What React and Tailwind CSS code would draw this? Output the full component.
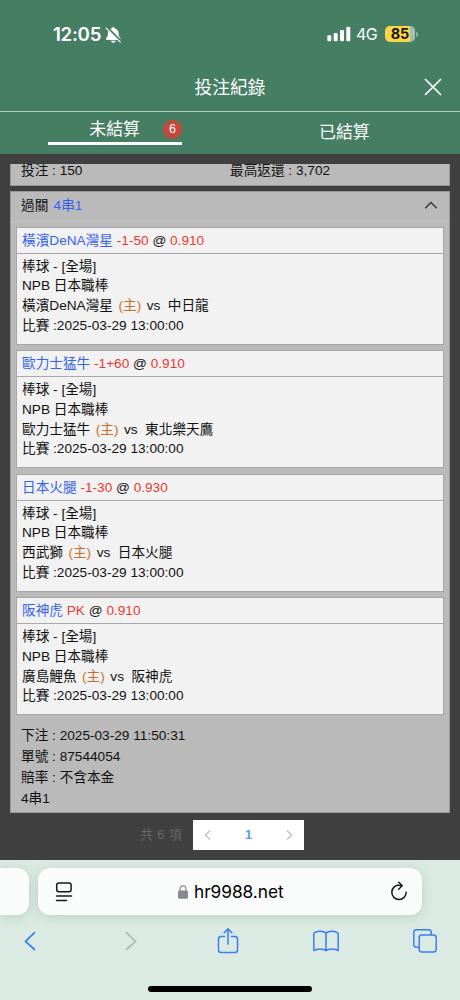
const legs = [
  { pick: '橫濱DeNA灣星', line: '-1-50', odds: '0.910', home: '橫濱DeNA灣星', away: '中日龍' },
  { pick: '歐力士猛牛', line: '-1+60', odds: '0.910', home: '歐力士猛牛', away: '東北樂天鷹' },
  { pick: '日本火腿', line: '-1-30', odds: '0.930', home: '西武獅', away: '日本火腿' },
  { pick: '阪神虎', line: 'PK', odds: '0.910', home: '廣島鯉魚', away: '阪神虎' },
];

function StatusBar() {
  return (
    <div className="flex h-[66px] items-end pb-[20px] pl-[53px] pr-[42px] text-white">
      <div className="mb-[-1px] h-[24px] w-[49px] whitespace-nowrap font-['Inter'] text-[18.7px] font-semibold leading-[24px] tracking-[-0.3px]">12:05</div>
      <svg className="mb-[2px] ml-[3px] h-[18px] w-[17px]" viewBox="0 0 17 18" fill="none">
        <path d="M8.3 1.2c-.9 0-1.600.5-1.700 1.200C4.100 3.100 2.900 5.100 2.900 7.600c0 2.600-.5 3.300-1.600 4.400-.7.8-.3 2 .8 2h12.400c1.100 0 1.500-1.200.8-2-1.100-1.100-1.600-1.800-1.600-4.400 0-2.500-1.200-4.500-3.700-5.200-.1-.7-.8-1.200-1.700-1.200z" fill="white" />
        <path d="M5.900 14.800h4.900c-.2 1.200-1.200 1.900-2.450 1.900s-2.250-.7-2.450-1.900z" fill="white" />
        <path d="M1.900 1.300L16 15.400" stroke="#467e64" strokeWidth="2.400" />
        <path d="M1.200 2.100L15.300 16.200" stroke="white" strokeWidth="1.200" strokeLinecap="round" />
      </svg>
      <div className="flex-1" />
      <svg className="mb-[4px] h-[16px] w-[24px]" viewBox="0 0 24 16" fill="white">
        <rect x="0.300" y="9.300" width="4" height="6" rx="1.200" />
        <rect x="6.700" y="7" width="4" height="8.300" rx="1.200" />
        <rect x="13" y="4" width="4" height="11.300" rx="1.200" />
        <rect x="19.300" y="0.700" width="4" height="14.600" rx="1.200" />
      </svg>
      <div className="ml-[5px] h-[24px] w-[22px] whitespace-nowrap font-['Inter'] text-[16px] leading-[24px] tracking-[-0.6px]">4G</div>
      <div className="mb-[4px] ml-[7px] flex items-center">
        <div className="flex h-[16px] w-[30px] items-center justify-center rounded-[5px] bg-[linear-gradient(90deg,#fbd64a_84%,#a3bfb1_84%)] font-['Inter'] text-[14.500px] font-bold leading-[16px] text-[#18170c]">85</div>
        <div className="ml-px h-[5px] w-[2px] rounded-r-full bg-[#8fb1a1]" />
      </div>
    </div>
  );
}

function Leg({ leg }) {
  return (
    <div className="flex h-[118px] flex-col border border-[#a6a6a6] bg-[#f2f2f2] px-[5px]">
      <div className="-mx-[5px] h-[26px] whitespace-nowrap border-b border-[#a8a8a8] px-[5px] leading-[25px]">
        <span className="text-[#3563ef]">{leg.pick}</span>
        <span className="text-[#e83b30]"> {leg.line}</span> @ <span className="text-[#e83b30]">{leg.odds}</span>
      </div>
      <div className="pt-[3.100px] leading-[19.800px]">
        <div className="h-[19.800px]">棒球 - [全場]</div>
        <div className="h-[19.800px]">NPB 日本職棒</div>
        <div className="flex h-[19.800px] whitespace-nowrap">
          <span>{leg.home}</span>
          <span className="ml-[5.500px] text-[#c9702f]">(主)</span>
          <span className="ml-[5.500px]">vs</span>
          <span className="ml-[7.500px]">{leg.away}</span>
        </div>
        <div className="h-[19.800px]">比賽 :2025-03-29 13:00:00</div>
      </div>
    </div>
  );
}

function BrowserBar() {
  return (
    <div className="flex h-[140px] flex-col overflow-hidden bg-[#dbebe4]">
      <div className="flex h-[55px] pt-[8px]">
        <div className="h-[47px] w-[29px] rounded-r-[12px] bg-[#f9fcfb] shadow-[0_2px_12px_rgba(60,100,80,0.2)]" />
        <div className="ml-[9px] flex h-[47px] w-[384px] items-center rounded-[12px] bg-[#f9fcfb] pl-[17px] pr-[14px] text-black shadow-[0_2px_12px_rgba(60,100,80,0.2)]">
          <svg className="h-[20px] w-[18px]" viewBox="0 0 18 20" fill="none" stroke="#171717" strokeWidth="1.500" strokeLinecap="round">
            <rect x="1.700" y="1" width="14.400" height="8.700" rx="2.200" />
            <path d="M1.500 14h15M1.500 18.500h10" />
          </svg>
          <svg className="ml-[105px] h-[14px] w-[10px]" viewBox="0 0 10 14">
            <rect x="0" y="5.600" width="10" height="8.100" rx="1.400" fill="#88898e" />
            <path d="M2.100 6V3.800a2.900 2.900 0 0 1 5.800 0V6" fill="none" stroke="#88898e" strokeWidth="1.200" />
          </svg>
          <div className="ml-[6px] whitespace-nowrap font-['Inter'] text-[17.300px] leading-[24px] tracking-[-0.050px]">hr9988.net</div>
          <div className="flex-1" />
          <svg className="mb-[2px] h-[20px] w-[18px]" viewBox="0 0 18 20" fill="none" stroke="#171717" strokeWidth="1.500" strokeLinecap="round" strokeLinejoin="round">
            <path d="M11.800 4.800C6 3 1.800 6.600 1.800 11.300a7.200 7.200 0 0 0 14.400 0" />
            <path d="M8.800 1.200l3.400 3.600-3.600 3.400" />
          </svg>
        </div>
      </div>
      <div className="grid h-[52px] grid-cols-[60px_142px_52px_144px_53px] items-center justify-items-center text-[#3b7ef6]">
        <svg className="h-[22px] w-[14px]" viewBox="0 0 14 22" fill="none" stroke="currentColor" strokeWidth="1.800" strokeLinecap="round" strokeLinejoin="round"><path d="M11.500 2.700L2.500 11.300l9 8.200" /></svg>
        <svg className="h-[22px] w-[14px]" viewBox="0 0 14 22" fill="none" stroke="#aebcb6" strokeWidth="1.800" strokeLinecap="round" strokeLinejoin="round"><path d="M2.500 2.700l9 8.600-9 8.200" /></svg>
        <svg className="h-[28px] w-[22px]" viewBox="0 0 22 28" fill="none" stroke="currentColor" strokeWidth="1.500" strokeLinecap="round" strokeLinejoin="round">
          <path d="M7.500 9.400H4c-1.500 0-2.500.9-2.500 2.500v11.200c0 1.600.9 2.500 2.500 2.500h14c1.600 0 2.500-.9 2.500-2.500V11.900c0-1.600-1-2.500-2.500-2.500h-3.500" />
          <path d="M11 17.200V2M7.200 5.700L11 1.900l3.800 3.800" />
        </svg>
        <svg className="h-[22px] w-[26px]" viewBox="0 0 26 22" fill="none" stroke="currentColor" strokeWidth="1.500" strokeLinejoin="round">
          <path d="M13 3.300C10.800.7 3.500.6.8 3.300v17.300c2.900-2.300 9.500-2.300 12.200 0 2.700-2.300 9.300-2.300 12.200 0V3.300C22.500.6 15.200.7 13 3.300v17.300" />
        </svg>
        <svg className="h-[24px] w-[24px]" viewBox="0 0 24 24" fill="none" stroke="currentColor" strokeWidth="1.500">
          <path d="M6 18.200H3.500c-1.700 0-2.700-1-2.700-2.700V3.500C.8 1.800 1.800.8 3.500.8h12c1.700 0 2.700 1 2.700 2.700V6" />
          <rect x="6.200" y="6" width="17" height="17" rx="2.700" />
        </svg>
      </div>
      <div className="mx-auto mt-[19px] h-[6px] w-[164px] rounded-full bg-black" />
    </div>
  );
}

export default function App() {
  return (
    <div className="flex h-[1000px] w-[460px] flex-col overflow-hidden bg-[#404040] font-['Liberation_Sans','Noto_Sans_CJK_TC',sans-serif] text-[13.650px] text-[#111]">
      <header className="h-[154px] shrink-0 bg-[#467e64] text-white">
        <div className="h-[46px]"><StatusBar /></div>
        <div className="grid h-[66px] grid-cols-[1fr_auto_1fr] items-end border-b border-[#b5cbc1] pb-[10px]">
          <span />
          <h1 className="h-[26px] text-[17.800px] leading-[26px]">投注紀錄</h1>
          <svg className="mb-[4px] mr-[17px] h-[20px] w-[20px] justify-self-end" viewBox="0 0 20 20" stroke="white" strokeWidth="1.700" strokeLinecap="round"><path d="M2.500 2.500l15 15M17.500 2.500l-15 15" /></svg>
        </div>
        <nav className="flex h-[42px]">
          <div className="ml-[48px] flex h-[33px] w-[134px] justify-end border-b-[3px] border-white">
            <span className="mr-[23px] mt-[5px] h-[26px] text-[16.900px] leading-[26px]">未結算</span>
            <span className="mt-[8px] h-[19px] w-[19px] rounded-full bg-[#c5483d] text-center text-[12.500px] leading-[19px]">6</span>
          </div>
          <div className="ml-[137px] mt-[8px] h-[26px] text-[16.900px] leading-[26px]">已結算</div>
        </nav>
      </header>

      <main className="flex h-[706px] shrink-0 flex-col px-[10px] pt-[10px]">
        <section className="flex h-[22px] shrink-0 overflow-hidden border-x border-b border-[#999] bg-[#bababa] px-[10px]">
          <div className="-mt-[2px] h-[18px] w-[209px] leading-[18px]">投注 : 150</div>
          <div className="-mt-[2px] h-[18px] leading-[18px]">最高返還 : 3,702</div>
        </section>
        <section className="mt-[5px] h-[622px] shrink-0 border border-[#999] bg-[#bababa]">
          <div className="flex h-[30px] items-center border-b border-[#c4c4c4] pl-[10px] pr-[11px]">
            <div className="-mt-px leading-[26px]">過關 <span className="ml-[1.500px] text-[#3563ef]">4串1</span></div>
            <svg className="ml-auto mb-[3px] h-[9px] w-[14px]" viewBox="0 0 14 9" fill="none" stroke="#333" strokeWidth="1.300"><path d="M1.200 7.200L7 1.500l5.800 5.700" /></svg>
          </div>
          <div className="flex flex-col gap-[5.500px] px-[5px] pt-[4.500px]">
            {legs.map((leg) => <Leg key={leg.pick} leg={leg} />)}
          </div>
          <div className="px-[10px] pt-[10px] leading-[21px]">
            <div className="h-[21px]">下注 : 2025-03-29 11:50:31</div>
            <div className="h-[21px]">單號 : 87544054</div>
            <div className="h-[21px]">賠率 : 不含本金</div>
            <div className="h-[21px]">4串1</div>
          </div>
        </section>
        <div className="mt-[7px] flex h-[30px] shrink-0 items-center pl-[130px] text-[#65666a]">
          <span className="w-[53px] text-[13px] tracking-[0.300px]">共 6 項</span>
          <div className="flex h-[30px] w-[111px] items-center justify-between bg-white px-[11px] text-[#bbbdc2]">
            <svg className="h-[12px] w-[7px]" viewBox="0 0 7 12" fill="none" stroke="currentColor" strokeWidth="1.200"><path d="M6 1.500L1.300 6 6 10.500" /></svg>
            <span className="text-[13.500px] font-bold text-[#5c9ff8]">1</span>
            <svg className="h-[12px] w-[7px]" viewBox="0 0 7 12" fill="none" stroke="currentColor" strokeWidth="1.200"><path d="M1 1.500L5.700 6 1 10.500" /></svg>
          </div>
        </div>
      </main>
      <BrowserBar />
    </div>
  );
}
